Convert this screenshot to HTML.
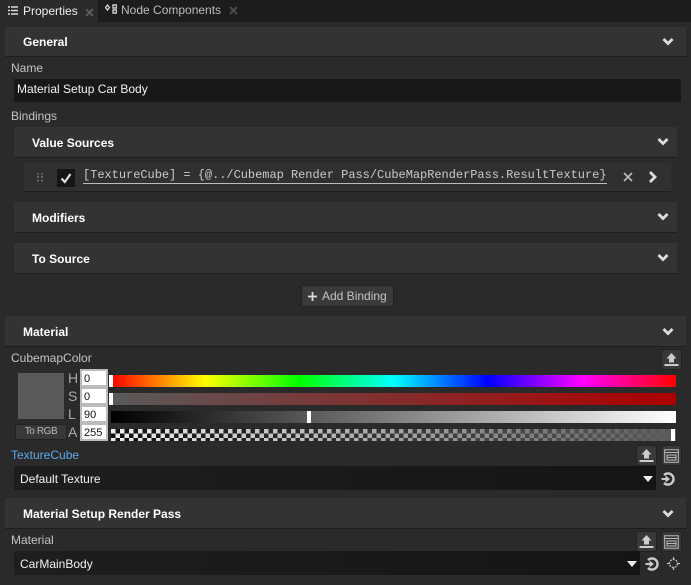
<!DOCTYPE html>
<html><head><meta charset="utf-8"><style>
html,body{margin:0;padding:0;width:691px;height:585px;overflow:hidden;background:#2a2a2a}
body{position:relative;font-family:"Liberation Sans",sans-serif;font-size:12px;color:#f0f0f0}
.a,.t,svg{position:absolute}
.t{white-space:nowrap;line-height:16px}
.hd{position:absolute;background:#333;border-bottom:1px solid #1e1e1e;box-sizing:border-box}
.b{font-weight:bold;color:#fff}
.lb{color:#c4c4c4}
.in{position:absolute;background:#181818;color:#f2f2f2;line-height:23px;box-sizing:border-box;padding-left:3px}
.btn{position:absolute;width:21px;height:21px;background:#383838;border:1px solid #222;border-radius:3px;box-sizing:border-box}
.n{position:absolute;left:80px;width:28px;height:18px;background:#fff;border:2px solid #bbb;box-sizing:border-box;color:#111;font-size:11px;line-height:16px;padding-left:2px}
.bar{position:absolute;left:111px;width:565px;height:12px}
.hl{position:absolute;width:12px;color:#aaa;font-size:14px;line-height:16px;left:68px}
.mk{position:absolute;width:4px;height:12px;background:#fff}
</style></head><body>
<div class="a" style="left:0;top:0;width:691px;height:22px;background:#1c1c1c"></div>
<div class="a" style="left:0;top:0;width:98px;height:23px;background:#2a2a2a"></div>
<svg style="left:8px;top:6px" width="10" height="9"><path d="M0 1h2M3 1h7M0 4.500h2M3 4.500h7M0 8h2M3 8h7" stroke="#ddd" stroke-width="1.500"/></svg>
<div class="t" style="left:23px;top:3px;color:#eee">Properties</div>
<svg style="left:85px;top:8px" width="9" height="9"><path d="M1 1l7 7M8 1l-7 7" stroke="#5a5a5a" stroke-width="2"/></svg>
<svg style="left:105px;top:4px" width="12" height="10"><path d="M2.500 1l2 2.500-2 2.500-2-2.500zM8 1h3.500v3H8zM8 6h3.500v3H8z" fill="none" stroke="#ccc" stroke-width="1.400"/></svg>
<div class="t" style="left:121px;top:2px;color:#bdbdbd">Node Components</div>
<svg style="left:229px;top:6px" width="9" height="9"><path d="M1 1l7 7M8 1l-7 7" stroke="#4c4c4c" stroke-width="2"/></svg>

<div class="hd" style="left:5px;top:27px;width:681px;height:30px"></div>
<div class="t b" style="left:23px;top:34px">General</div>
<svg style="left:661px;top:37px" width="14" height="10"><path d="M2.500 2L7 6.500 11.500 2" fill="none" stroke="#ddd" stroke-width="2.800"/></svg>
<div class="t lb" style="left:11px;top:60px">Name</div>
<div class="in" style="left:14px;top:79px;width:667px;height:23px;line-height:20px">Material Setup Car Body</div>
<div class="t lb" style="left:11px;top:108px">Bindings</div>

<div class="hd" style="left:14px;top:127px;width:663px;height:31px"></div>
<div class="t b" style="left:32px;top:135px">Value Sources</div>
<svg style="left:656px;top:137px" width="14" height="10"><path d="M2.500 2L7 6.500 11.500 2" fill="none" stroke="#ddd" stroke-width="2.800"/></svg>
<div class="hd" style="left:24px;top:163px;width:647px;height:29px;background:#303030"></div>
<svg style="left:37px;top:173px" width="6" height="9"><path d="M0 .5h2M4 .5h2M0 4h2M4 4h2M0 7.500h2M4 7.500h2" stroke="#666" stroke-width="2"/></svg>
<div class="a" style="left:57px;top:169px;width:18px;height:18px;background:#151515"></div>
<svg style="left:57px;top:169px" width="18" height="18"><path d="M4.500 9.500L7.800 13 13.500 5" fill="none" stroke="#ddd" stroke-width="2.200"/></svg>
<div class="t" style="left:83px;top:168px;font-family:'Liberation Mono',monospace;font-size:12px;letter-spacing:-.03px;color:#c9c9c9;border-bottom:1px solid #bbb;line-height:15px">[TextureCube] = {@../Cubemap Render Pass/CubeMapRenderPass.ResultTexture}</div>
<svg style="left:623px;top:172px" width="10" height="10"><path d="M1 1l8 8M9 1l-8 8" stroke="#bbb" stroke-width="1.600"/></svg>
<svg style="left:647px;top:170px" width="12" height="14"><path d="M3 2l5 5-5 5" fill="none" stroke="#ddd" stroke-width="2.800"/></svg>

<div class="hd" style="left:14px;top:202px;width:663px;height:31px"></div>
<div class="t b" style="left:32px;top:210px">Modifiers</div>
<svg style="left:656px;top:212px" width="14" height="10"><path d="M2.500 2L7 6.500 11.500 2" fill="none" stroke="#ddd" stroke-width="2.800"/></svg>
<div class="hd" style="left:14px;top:243px;width:663px;height:31px"></div>
<div class="t b" style="left:32px;top:251px">To Source</div>
<svg style="left:656px;top:253px" width="14" height="10"><path d="M2.500 2L7 6.500 11.500 2" fill="none" stroke="#ddd" stroke-width="2.800"/></svg>

<div class="a" style="left:301px;top:285px;width:93px;height:22px;background:#3a3a3a;border:1px solid #222;border-radius:2px;box-sizing:border-box"></div>
<svg style="left:308px;top:292px" width="9" height="9"><path d="M4.500 0v9M0 4.500h9" stroke="#ddd" stroke-width="1.700"/></svg>
<div class="t" style="left:322px;top:288px;color:#c4c4c4">Add Binding</div>

<div class="hd" style="left:5px;top:316px;width:681px;height:31px"></div>
<div class="t b" style="left:23px;top:324px">Material</div>
<svg style="left:661px;top:327px" width="14" height="10"><path d="M2.500 2L7 6.500 11.500 2" fill="none" stroke="#ddd" stroke-width="2.800"/></svg>
<div class="t lb" style="left:11px;top:350px">CubemapColor</div>
<div class="btn" style="left:661px;top:349px"><svg style="left:2px;top:3px" width="15" height="14"><path d="M7.500 0l5 5.500H10V9.500H5V5.500H2.500zM.5 11h14v2H.5z" fill="#ccc"/></svg></div>

<div class="a" style="left:18px;top:373px;width:46px;height:46px;background:#5a5a5a"></div>
<div class="a" style="left:15px;top:424px;width:52px;height:16px;background:#383838;border:1px solid #222;border-radius:2px;box-sizing:border-box;color:#b8b8b8;font-size:10px;letter-spacing:-.4px;line-height:14px;text-align:center">To RGB</div>
<div class="hl" style="top:370px">H</div><div class="hl" style="top:388px">S</div><div class="hl" style="top:406px">L</div><div class="hl" style="top:424px">A</div>
<div class="n" style="top:369px">0</div><div class="n" style="top:387px">0</div><div class="n" style="top:405px">90</div><div class="n" style="top:423px">255</div>
<div class="bar" style="top:375px;background:linear-gradient(90deg,#f00,#ff0,#0f0,#0ff,#00f,#f0f,#f00)"></div>
<div class="bar" style="top:393px;background:linear-gradient(90deg,#5a5a5a,#ad0000)"></div>
<div class="bar" style="top:411px;background:linear-gradient(90deg,#000,#fff)"></div>
<div class="bar" style="top:429px;background:linear-gradient(90deg,rgba(90,90,90,0),#5a5a5a),repeating-conic-gradient(#111 0 25%,#eee 0 50%) 0 0/9px 9px"></div>
<div class="mk" style="left:109px;top:375px"></div><div class="mk" style="left:109px;top:393px"></div><div class="mk" style="left:307px;top:411px"></div><div class="mk" style="left:671px;top:429px"></div>

<div class="t" style="left:11px;top:447px;color:#5ea9e6">TextureCube</div>
<div class="btn" style="left:636px;top:445px"><svg style="left:2px;top:3px" width="15" height="14"><path d="M7.500 0l5 5.500H10V9.500H5V5.500H2.500zM.5 11h14v2H.5z" fill="#ccc"/></svg></div>
<div class="btn" style="left:661px;top:445px"><svg style="left:2px;top:3px" width="15" height="14"><path d="M.7.700h13.600v12.600H.7zM.7 3.500h13.600M3 6h9v5H3zM3 8.500h9" fill="none" stroke="#bbb"/></svg></div>
<div class="in" style="left:14px;top:466px;width:642px;height:24px;line-height:26px;padding-left:6px;background:linear-gradient(90deg,#1e1e1e,#151515)">Default Texture</div>
<svg style="left:643px;top:476px" width="10" height="6"><path d="M0 0h10L5 6z" fill="#eee"/></svg>
<svg style="left:660px;top:471px" width="16" height="16"><path d="M4 4A5.600 5.600 0 1 1 4 12" fill="none" stroke="#ccc" stroke-width="2.400"/><path d="M1.500 7h4V4.500L10 8l-4.500 3.500V9h-4z" fill="#ccc"/></svg>

<div class="hd" style="left:5px;top:498px;width:681px;height:31px"></div>
<div class="t b" style="left:23px;top:506px">Material Setup Render Pass</div>
<svg style="left:661px;top:509px" width="14" height="10"><path d="M2.500 2L7 6.500 11.500 2" fill="none" stroke="#ddd" stroke-width="2.800"/></svg>
<div class="t lb" style="left:11px;top:532px">Material</div>
<div class="btn" style="left:636px;top:531px"><svg style="left:2px;top:3px" width="15" height="14"><path d="M7.500 0l5 5.500H10V9.500H5V5.500H2.500zM.5 11h14v2H.5z" fill="#ccc"/></svg></div>
<div class="btn" style="left:661px;top:531px"><svg style="left:2px;top:3px" width="15" height="14"><path d="M.7.700h13.600v12.600H.7zM.7 3.500h13.600M3 6h9v5H3zM3 8.500h9" fill="none" stroke="#bbb"/></svg></div>
<div class="in" style="left:14px;top:551px;width:626px;height:24px;line-height:26px;padding-left:6px;background:linear-gradient(90deg,#1e1e1e,#151515)">CarMainBody</div>
<svg style="left:627px;top:561px" width="10" height="6"><path d="M0 0h10L5 6z" fill="#eee"/></svg>
<svg style="left:644px;top:556px" width="16" height="16"><path d="M4 4A5.600 5.600 0 1 1 4 12" fill="none" stroke="#ccc" stroke-width="2.400"/><path d="M1.500 7h4V4.500L10 8l-4.500 3.500V9h-4z" fill="#ccc"/></svg>
<svg style="left:667px;top:557px" width="13" height="13"><circle cx="6.500" cy="6.500" r="4" fill="none" stroke="#bbb" stroke-width="1.300" stroke-dasharray="2 1"/><path d="M6.500 0v3M6.500 10v3M0 6.500h3M10 6.500h3" stroke="#bbb" stroke-width="1.300"/></svg>
</body></html>
